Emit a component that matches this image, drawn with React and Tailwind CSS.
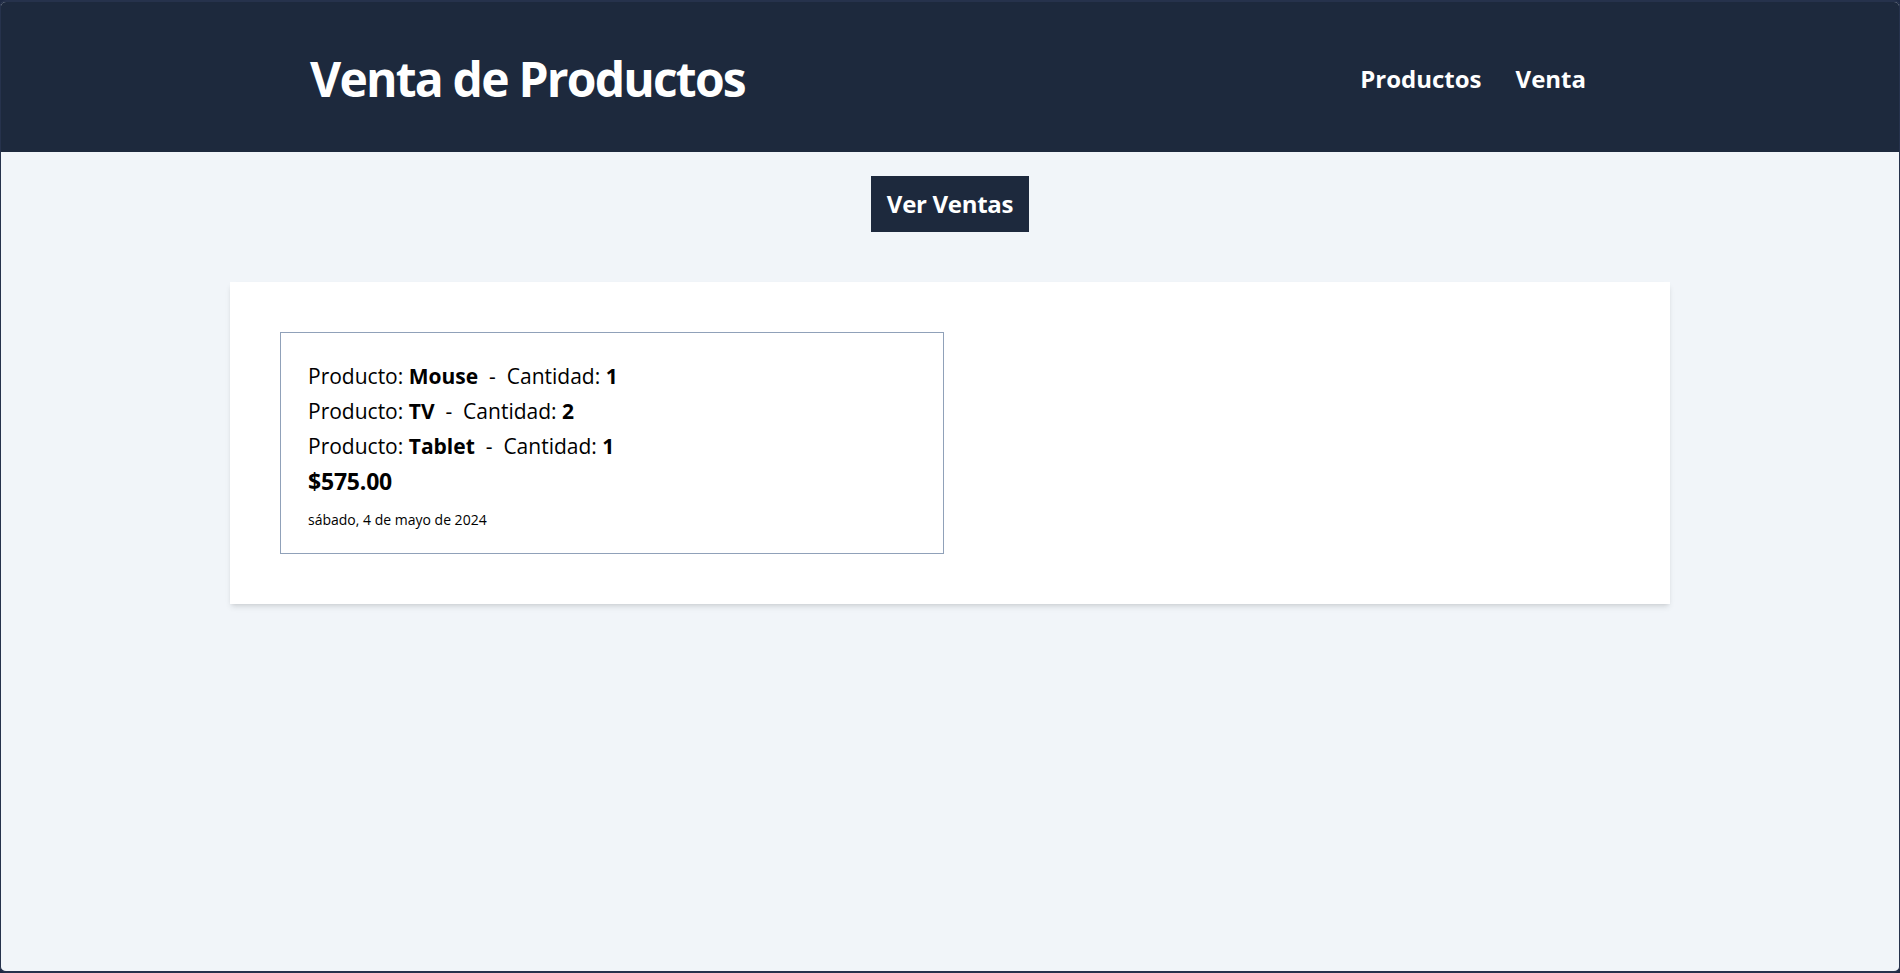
import React from 'react';

const ventas = [
  {
    id: 1,
    items: [
      { producto: 'Mouse', cantidad: 1 },
      { producto: 'TV', cantidad: 2 },
      { producto: 'Tablet', cantidad: 1 },
    ],
    total: 575,
    fecha: 'sábado, 4 de mayo de 2024',
  },
];

const font = { fontFamily: '"Segoe UI", "Open Sans", "Noto Sans", sans-serif' };

// Tarjeta de una venta
const VentaCard = ({ venta }) => (
  <div className="border border-slate-400 pl-[27px] pr-6 pt-[26px] pb-[23px] flex flex-col">
    {venta.items.map((item, i) => (
      <p key={i} className="text-[21px] leading-[35px] text-black">
        Producto: <span className="font-bold">{item.producto}</span>&nbsp; - &nbsp;Cantidad:{' '}
        <span className="font-bold">{item.cantidad}</span>
      </p>
    ))}
    <p className="text-[23px] leading-[35px] font-bold text-black tracking-[-0.2px]">${venta.total.toFixed(2)}</p>
    <p className="text-sm leading-5 mt-[11px] text-black">{venta.fecha}</p>
  </div>
);

const App = () => {
  return (
    <div className="h-screen bg-[#1e2a44] overflow-hidden" style={font}>
      <div className="h-full border-t-2 border-x border-b-2 border-[#26324c] rounded-md overflow-hidden bg-slate-100 flex flex-col">
        {/* Header */}
        <header className="bg-slate-800 h-[150px] shrink-0">
          <div className="max-w-[1280px] mx-auto h-full pt-1 flex items-center justify-between">
            <h1 className="text-5xl font-bold text-white tracking-[-1.8px]">Venta de Productos</h1>
            <nav className="flex gap-[34px] pr-1">
              <a className="text-2xl font-bold text-white">Productos</a>
              <a className="text-2xl font-bold text-white">Venta</a>
            </nav>
          </div>
        </header>

        <main className="flex flex-col items-center">
          <button className="mt-6 bg-slate-800 text-white text-2xl font-bold px-4 py-3 tracking-[-0.3px]">Ver Ventas</button>

          <div className="w-[1440px] mt-[50px] bg-white shadow-md p-[50px]">
            <div className="grid grid-cols-2 gap-3">
              {ventas.map((v) => (
                <VentaCard key={v.id} venta={v} />
              ))}
            </div>
          </div>
        </main>
      </div>
    </div>
  );
};

export default App;
